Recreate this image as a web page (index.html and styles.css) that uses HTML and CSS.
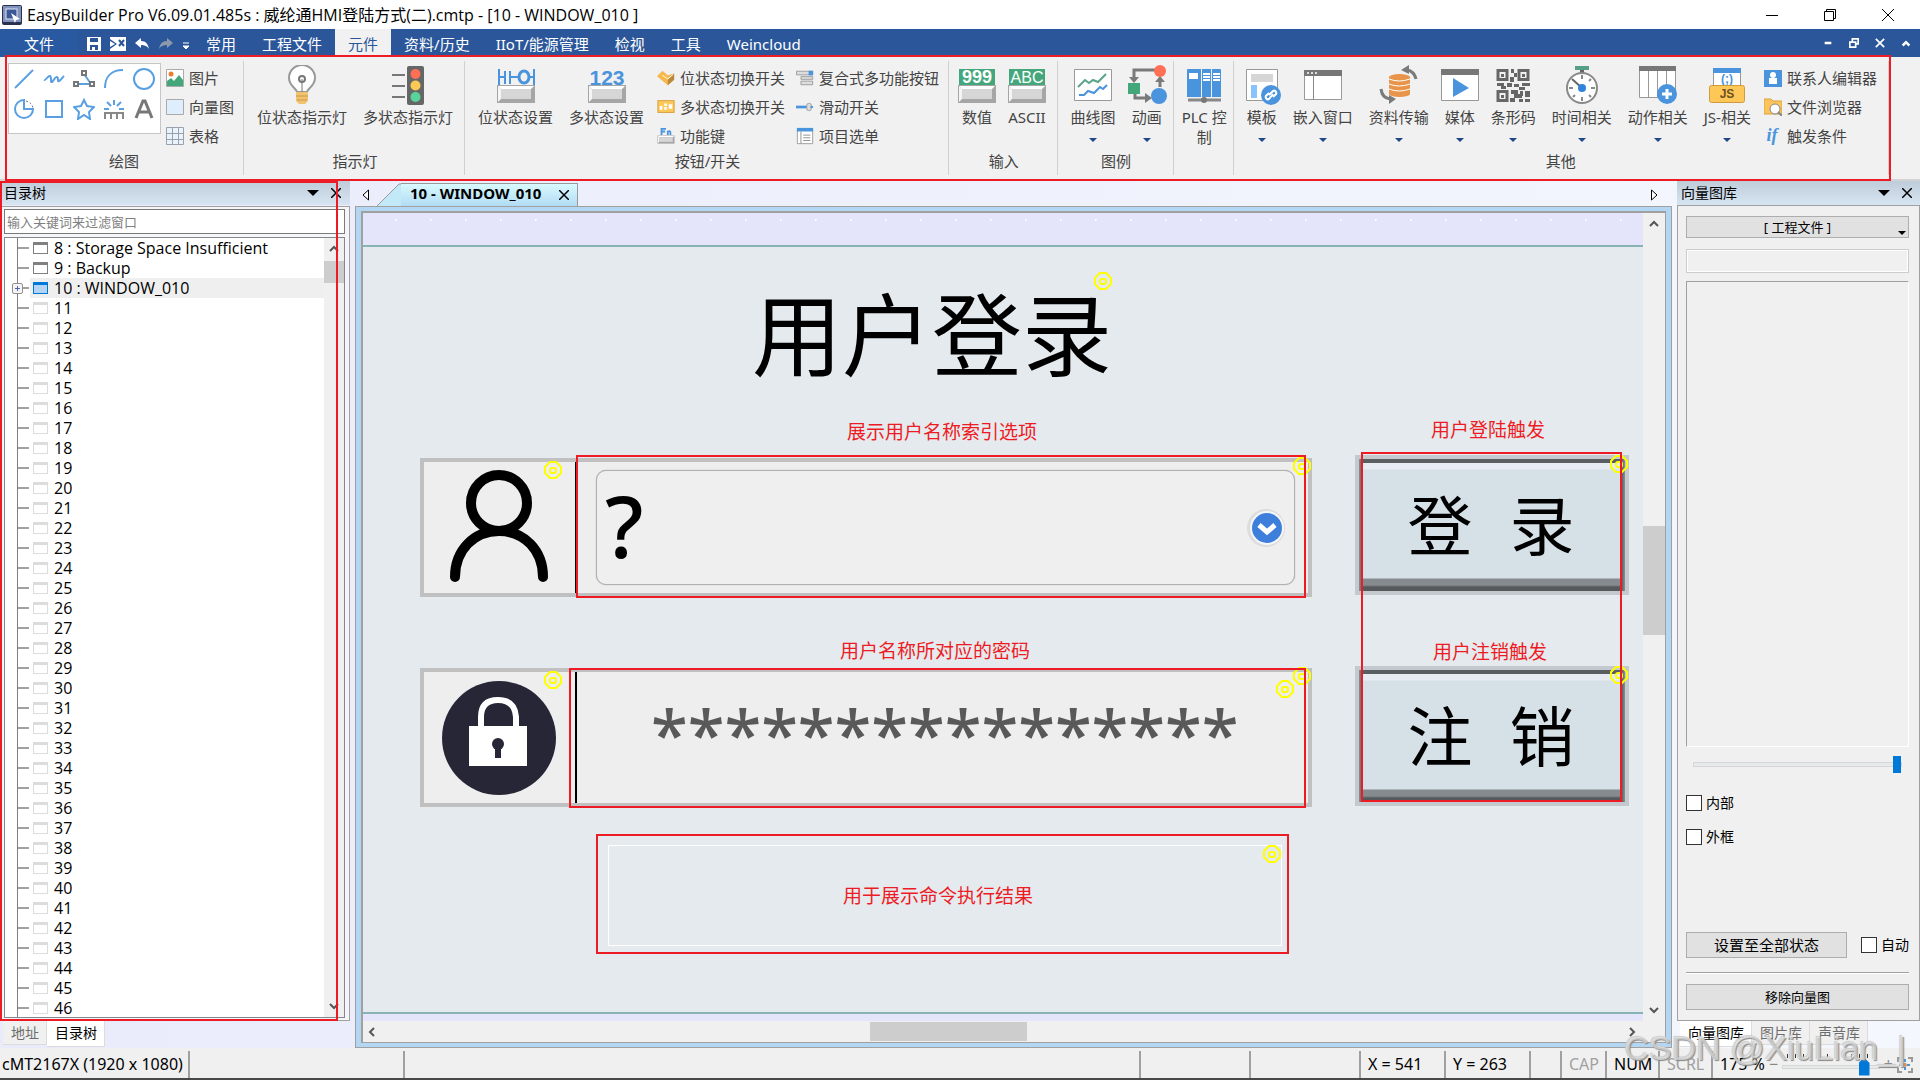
FILE: index.html
```html
<!DOCTYPE html>
<html lang="zh-CN">
<head>
  <meta charset="UTF-8" />
  <meta name="viewport" content="width=device-width, initial-scale=1.0"/>
  <title>EasyBuilder Pro</title>
  <link rel="stylesheet" href="styles.css">
</head>
<body>
  <svg class="defs" aria-hidden="true">
    <symbol id="gear" viewBox="0 0 18 18">
      <path d="M6 1h6l5 5v6l-5 5H6l-5-5V6z" fill="none" stroke="#ff0" stroke-width="2" stroke-linejoin="round"/>
      <rect x="6" y="7" width="6" height="5" rx="2" fill="none" stroke="#ff0" stroke-width="2"/>
    </symbol>
    <symbol id="key" viewBox="0 0 40 20">
      <rect x="1" y="1" width="38" height="18" fill="#a6a6a6"/>
      <path d="M2 2h36l-3 3H5z" fill="#fff"/>
      <path d="M2 2v16l3-3V5z" fill="#f5f5f5"/>
      <rect x="5" y="5" width="30" height="10" fill="#d6d6d6"/>
    </symbol>
    <symbol id="up" viewBox="0 0 12 12"><path d="M2 8l4-4 4 4" fill="none" stroke="#555" stroke-width="2"/></symbol>
    <symbol id="down" viewBox="0 0 12 12"><path d="M2 4l4 4 4-4" fill="none" stroke="#555" stroke-width="2"/></symbol>
    <symbol id="left" viewBox="0 0 12 12"><path d="M8 2L4 6l4 4" fill="none" stroke="#555" stroke-width="2"/></symbol>
    <symbol id="right" viewBox="0 0 12 12"><path d="M4 2l4 4-4 4" fill="none" stroke="#555" stroke-width="2"/></symbol>
    <symbol id="caret" viewBox="0 0 12 6"><path d="M0 0h12L6 6z"/></symbol>
    <symbol id="cross" viewBox="0 0 10 10"><path d="M0 0l10 10M10 0L0 10" fill="none" stroke="currentColor" stroke-width="1.500"/></symbol>
  </svg>

  <header class="titlebar">
    <svg class="app-icon" viewBox="0 0 20 20">
      <rect width="20" height="20" rx="2" fill="#26304f"/>
      <rect x="1" y="1" width="18" height="16" fill="#8292bd"/>
      <rect x="4" y="4" width="11" height="10" fill="#3c5896" stroke="#dfe5f5"/>
      <path d="M9 8l9 6-4 1-1 3z" fill="#fff"/>
    </svg>
    <h1>EasyBuilder Pro V6.09.01.485s : 威纶通HMI登陆方式(二).cmtp - [10 - WINDOW_010 ]</h1>
    <div class="window-buttons">
      <button aria-label="最小化"><svg viewBox="0 0 12 12"><path d="M0 6.500h12" stroke="#000"/></svg></button>
      <button aria-label="还原"><svg viewBox="0 0 12 12"><path d="M.5 2.500h9v9h-9zM2.500 2.500v-2h9v9h-2" fill="none" stroke="#000"/></svg></button>
      <button aria-label="关闭"><svg viewBox="0 0 12 12"><path d="M0 0l12 12M12 0L0 12" stroke="#000"/></svg></button>
    </div>
  </header>

  <nav class="menubar">
    <button class="file-tab">文件</button>
    <div class="quick">
      <button aria-label="保存"><svg viewBox="0 0 16 16"><path d="M1 1h14v14H1z" fill="#fff"/><path d="M4 2h8v4H4zM4 9h8v5H4z" fill="#2b579a"/><path d="M6 11h3v4H6z" fill="#fff"/></svg></button>
      <button aria-label="编译"><svg viewBox="0 0 16 16"><path d="M0 1h16v14H0z" fill="#fff"/><path d="M0 3l7 5-7 5z" fill="#2b579a"/><path d="M0 5l5 3-5 3z" fill="#fff"/><path d="M9 4l5 6M14 4l-5 6" stroke="#2b579a" stroke-width="2"/></svg></button>
      <button aria-label="撤销"><svg viewBox="0 0 16 16"><path d="M1 7l6-5v3c5 0 7 3 8 8-2-3-4-4-8-4v3z" fill="#fff"/></svg></button>
      <button aria-label="重做"><svg viewBox="0 0 16 16"><path d="M15 7L9 2v3c-5 0-7 3-8 8 2-3 4-4 8-4v3z" fill="#8c99ad"/></svg></button>
      <button class="more" aria-label="更多"><svg viewBox="0 0 8 16"><path d="M1 7h6M1 10h6l-3 3z" fill="#fff" stroke="#fff"/></svg></button>
    </div>
    <a href="#">常用</a>
    <a href="#">工程文件</a>
    <a href="#" class="active">元件</a>
    <a href="#">资料/历史</a>
    <a href="#">IIoT/能源管理</a>
    <a href="#">检视</a>
    <a href="#">工具</a>
    <a href="#">Weincloud</a>
    <div class="mdi-buttons">
      <button aria-label="最小化窗口"><svg viewBox="0 0 12 12"><path d="M2 6h8" stroke="#fff" stroke-width="3"/></svg></button>
      <button aria-label="还原窗口"><svg viewBox="0 0 12 12"><path d="M1 5h7v6H1zM4 4V1h7v6H9" fill="none" stroke="#fff" stroke-width="2"/></svg></button>
      <button aria-label="关闭窗口"><svg viewBox="0 0 12 12"><path d="M1 1l10 10M11 1L1 11" stroke="#fff" stroke-width="2"/></svg></button>
      <button aria-label="折叠功能区"><svg viewBox="0 0 12 12"><path d="M2 9l4-4 4 4" fill="none" stroke="#fff" stroke-width="3"/></svg></button>
    </div>
  </nav>

  <section class="ribbon">
    <div class="group">
      <div class="group-body">
        <div class="gallery">
          <button aria-label="直线"><svg viewBox="0 0 22 22"><path d="M2 20L20 2" class="blue"/></svg></button>
          <button aria-label="曲线"><svg viewBox="0 0 22 22"><path d="M1 12c2 1 4-5 6-4s0 7 2 6 3-6 5-5 0 5 2 4 3-3 5-5" class="blue"/></svg></button>
          <button aria-label="折线"><svg viewBox="0 0 22 22"><path d="M4 16h14L11 6" class="blue"/><path d="M1 14h4v4H1zM17 14h4v4h-4zM9 3h4v4H9z" class="node"/></svg></button>
          <button aria-label="弧形"><svg viewBox="0 0 22 22"><path d="M2 20C2 9 8 2 20 2" class="blue"/></svg></button>
          <button aria-label="圆形"><svg viewBox="0 0 22 22"><circle cx="11" cy="11" r="10" class="blue"/></svg></button>
          <button aria-label="扇形"><svg viewBox="0 0 22 22"><path d="M11 2a9 9 0 1 0 9 9h-9z" class="blue"/><path d="M13 3c4 1 6 3 7 7" fill="none" stroke="#777" stroke-dasharray="2 2"/></svg></button>
          <button aria-label="矩形"><svg viewBox="0 0 22 22"><path d="M3 3h16v16H3z" class="blue"/></svg></button>
          <button aria-label="星形"><svg viewBox="0 0 22 22"><path d="M11 2l3 6 7 1-5 5 1 7-6-4-6 4 1-7-5-5 7-1z" class="blue"/></svg></button>
          <button aria-label="刻度"><svg viewBox="0 0 22 22"><path d="M1 11h5M4 4l4 4M11 2v5M18 4l-4 4M21 11h-5" class="blue"/><path d="M2 21v-6h18v6M8 15v6M14 15v6" fill="none" stroke="#888" stroke-width="2"/></svg></button>
          <button aria-label="文字"><svg viewBox="0 0 22 22"><path d="M3 20l7-17h2l7 17M6 14h10" fill="none" stroke="#777" stroke-width="3"/></svg></button>
        </div>
        <div class="stack">
          <button><svg viewBox="0 0 18 18"><path d="M.5.500h17v17H.5z" fill="#fff" stroke="#aaa"/><circle cx="5" cy="5" r="2.500" fill="#ed7d31"/><path d="M1 17v-5l4-3 3 3 5-6 4 5v6z" fill="#44a77c"/></svg>图片</button>
          <button><svg viewBox="0 0 18 18"><path d="M.5 1.500h17v15H.5z" fill="#dfeefc" stroke="#aaa"/></svg>向量图</button>
          <button><svg viewBox="0 0 18 18"><path d="M.5.500h17v17H.5zM.5 6.500h17M.5 12.500h17M6.500.500v17M12.500.500v17" fill="#eaf3fc" stroke="#98a2ad"/></svg>表格</button>
        </div>
      </div>
      <div class="group-name">绘图</div>
    </div>

    <div class="group">
      <div class="group-body">
        <button class="big"><svg viewBox="0 0 40 40"><path d="M15 27c0-3-8-6-8-14a13 13 0 0 1 26 0c0 8-8 11-8 14z" fill="#fff" stroke="#999" stroke-width="2"/><circle cx="20" cy="14" r="3" fill="none" stroke="#777" stroke-width="2"/><path d="M20 14v13" stroke="#777"/><path d="M14 27h12v9l-3 3h-6l-3-3z" fill="#f0c36c"/><path d="M14 31h12M15 35h10" stroke="#c79a4b"/></svg>位状态指示灯</button>
        <button class="big"><svg viewBox="0 0 40 40"><path d="M4 10h13M4 21h13M4 32h13" stroke="#777" stroke-width="2"/><rect x="19" y="1" width="17" height="39" rx="2" fill="#666"/><circle cx="27.500" cy="9" r="5" fill="#ff6f55"/><circle cx="27.500" cy="20.500" r="5" fill="#ffc957"/><circle cx="27.500" cy="32" r="5" fill="#58d49b"/></svg>多状态指示灯</button>
      </div>
      <div class="group-name">指示灯</div>
    </div>

    <div class="group">
      <div class="group-body">
        <button class="big"><svg viewBox="0 0 40 40"><path d="M3 4v16M3 12h5M9 6v13M14 6v13M14 12h9M33 12h4M38 4v16" fill="none" stroke="#4a94de" stroke-width="2"/><ellipse cx="28" cy="12" rx="5" ry="6" fill="none" stroke="#4a94de" stroke-width="3"/><use href="#key" y="19" width="40" height="20"/></svg>位状态设置</button>
        <button class="big"><svg viewBox="0 0 40 40"><text x="20" y="20" class="digits">123</text><use href="#key" y="19" width="40" height="20"/></svg>多状态设置</button>
        <div class="stack">
          <button><svg viewBox="0 0 20 18"><path d="M0 7l6-6 6 5 7-2v7l-7 6z" fill="#f7b84b"/><path d="M12 11l7-7v7l-7 6z" fill="#b98a3d"/><path d="M6 6l6 4 6-5" fill="none" stroke="#fff"/></svg>位状态切换开关</button>
          <button><svg viewBox="0 0 20 18"><rect x="1" y="2" width="18" height="13" fill="#ffc85a" stroke="#d49a34"/><path d="M3 8h3v4H3zM8 5h3v3H8zM8 9h3v3H8zM13 6h4v5h-4z" fill="#fff"/></svg>多状态切换开关</button>
          <button><svg viewBox="0 0 20 18"><path d="M5 8V1h5M5 4h4M12 8V4c3-1 3 0 3 4" fill="none" stroke="#4a94de" stroke-width="2"/><use href="#key" y="8" width="20" height="10"/></svg>功能键</button>
        </div>
        <div class="stack">
          <button><svg viewBox="0 0 20 18"><path d="M.5 1.500h18v4H.5zM5.500 7.500h13v3h-13zM5.500 12.500h13v4h-13z" fill="#ddd" stroke="#999"/><path d="M14 1h5v5h-5z" fill="#4a94de"/></svg>复合式多功能按钮</button>
          <button><svg viewBox="0 0 20 18"><path d="M0 9h12" stroke="#4a94de" stroke-width="3"/><rect x="12" y="5" width="5" height="8" rx="2" fill="#ddd" stroke="#999"/><path d="M16 9h3" stroke="#4a94de" stroke-width="2"/></svg>滑动开关</button>
          <button><svg viewBox="0 0 20 18"><path d="M1.500 1.500h17v16h-17z" fill="#fff" stroke="#999"/><path d="M1 0h18v4H1z" fill="#4a94de"/><path d="M5.500 4v13M8 8h8M8 11h8M8 14h8" stroke="#888"/></svg>项目选单</button>
        </div>
      </div>
      <div class="group-name">按钮/开关</div>
    </div>

    <div class="group">
      <div class="group-body">
        <button class="big"><svg viewBox="0 0 40 40"><path d="M2 4h36v16H2z" fill="#44a77c"/><text x="20" y="18" class="screen">999</text><use href="#key" y="19" width="40" height="20"/></svg>数值</button>
        <button class="big"><svg viewBox="0 0 40 40"><path d="M2 4h36v16H2z" fill="#44a77c"/><text x="20" y="18" class="screen abc">ABC</text><use href="#key" y="19" width="40" height="20"/></svg>ASCII</button>
      </div>
      <div class="group-name">输入</div>
    </div>

    <div class="group">
      <div class="group-body">
        <button class="big drop"><svg viewBox="0 0 40 40"><path d="M1.500 4.500h37v31h-37z" fill="#fff" stroke="#999"/><path d="M5 22l7-7 4 3 4-3 5 2 8-8" fill="none" stroke="#5ba58a" stroke-width="2"/><path d="M6 30h5l4-4 6 2 6-6 3 2 4-4" fill="none" stroke="#4a94de" stroke-width="2"/></svg>曲线图</button>
        <button class="big drop"><svg viewBox="0 0 40 40"><path d="M28 5H7v9M8 28v5h12M33 22v-8" fill="none" stroke="#7a7a7a" stroke-width="3"/><path d="M2 12h10l-5 6zM18 28v10l7-5zM28 17h10l-5-6z" fill="#7a7a7a"/><path d="M1 18h12v11H1z" fill="#44a77c"/><circle cx="33" cy="6" r="6" fill="#ff6f55"/><circle cx="32" cy="31" r="8" fill="#4a94de"/></svg>动画</button>
      </div>
      <div class="group-name">图例</div>
    </div>

    <div class="group">
      <div class="group-body">
        <button class="big plc"><svg viewBox="0 0 40 40"><path d="M3 5q0-1 1-1h13v28H3zM18 4h9v28h-9zM28 4h8q1 0 1 1v27h-9z" fill="#4a94de"/><path d="M5 8h9v6H5zM19 8h7v2h-7zM19 11h7v2h-7zM19 14h7v2h-7zM29 8h7v2h-7zM29 11h7v2h-7zM29 14h7v2h-7z" fill="#fff"/><path d="M4 35h33" stroke="#888" stroke-width="3"/><circle cx="20" cy="35" r="3" fill="#777"/></svg>PLC 控<br>制</button>
      </div>
      <div class="group-name"></div>
    </div>

    <div class="group last">
      <div class="group-body">
        <button class="big drop"><svg viewBox="0 0 40 40"><path d="M4.500 4.500h31v31h-31z" fill="#fff" stroke="#999"/><path d="M9 9h22v8H9z" fill="#d6d6d6"/><path d="M9 20h6v13H9z" fill="#8ac3fb"/><circle cx="29" cy="30" r="10" fill="#4a94de"/><path d="M27 30l4-4q2-1 3 1t-1 3l-2 2M31 29l-4 5q-2 1-3-1t1-3l2-2" fill="none" stroke="#fff" stroke-width="2"/></svg>模板</button>
        <button class="big drop"><svg viewBox="0 0 40 40"><path d="M1.500 5.500h37v29h-37z" fill="#fff" stroke="#999"/><path d="M1 5h38v6H1z" fill="#777"/><path d="M4 8h2M8 8h2M12 8h2" stroke="#ddd" stroke-width="2"/><path d="M10.500 11v24" stroke="#888"/></svg>嵌入窗口</button>
        <button class="big drop"><svg viewBox="0 0 40 40"><path d="M10 12h21v17H10z" fill="#e8954b"/><ellipse cx="20.500" cy="12" rx="10.500" ry="3" fill="#e8954b"/><ellipse cx="20.500" cy="29" rx="10.500" ry="3" fill="#e8954b"/><path d="M10 14q10 4 21 0M10 19q10 4 21 0M10 24q10 4 21 0" fill="none" stroke="#fff"/><path d="M37 14q-2-8-9-9M2 24q1 9 9 10" fill="none" stroke="#7a7a7a" stroke-width="3"/><path d="M22 5l8-5v9zM17 34l-7 5v-9z" fill="#7a7a7a"/></svg>资料传输</button>
        <button class="big drop"><svg viewBox="0 0 40 40"><path d="M1.500 4.500h37v31h-37z" fill="#fff" stroke="#999"/><path d="M1 4h38v6H1z" fill="#777"/><path d="M13 13l16 10-16 9z" fill="#4a94de"/></svg>媒体</button>
        <button class="big drop"><svg viewBox="0 0 40 40"><path d="M5 5.500h9v9H5zM26 5.500h9v9h-9zM5 26.500h9v9H5z" fill="none" stroke="#666" stroke-width="3"/><path d="M8 9h3v3H8zM29 9h3v3h-3zM8 30h3v3H8zM18 4h3v4h-3zM21 8h3v4h-3zM17 12h4v5h-4zM4 18h7v3H4zM14 18h5v4h-5zM21 19h5v3h-5zM29 18h8v3h-8zM8 21h5v3H8zM26 22h6v3h-6zM18 25h7v4h-7zM21 29h8v4h-8zM17 33h5v4h-5zM27 26h3v5h-3zM32 26h5v6h-5zM26 34h4v3h-4zM32 34h5v3h-5z" fill="#666"/></svg>条形码</button>
        <button class="big drop"><svg viewBox="0 0 40 40"><path d="M13 1h14v4H13z" fill="#559f84"/><path d="M18 5h4v4h-4z" fill="#666"/><circle cx="20" cy="23" r="15" fill="#fff" stroke="#888" stroke-width="2"/><path d="M20 10v4M20 32v4M7 23h4M29 23h4M29 14l-2 2M29 32l-2-2M11 32l2-2" stroke="#888" stroke-width="2"/><path d="M10 14l10 9" stroke="#666" stroke-width="2"/><circle cx="20" cy="23" r="4" fill="#2f83da"/></svg>时间相关</button>
        <button class="big drop"><svg viewBox="0 0 40 40"><path d="M1.500 2.500h36v30h-36zM10.500 5v27M19.500 5v27M28.500 5v27" fill="#fff" stroke="#999"/><path d="M1 1h37v5H1z" fill="#777"/><circle cx="29" cy="29" r="10" fill="#4a94de"/><path d="M24 29h10M29 24v10" stroke="#fff" stroke-width="3"/></svg>动作相关</button>
        <button class="big drop"><svg viewBox="0 0 40 40"><path d="M6.500 3.500h27v20h-27z" fill="#fff" stroke="#999"/><path d="M6 3h28v5H6z" fill="#4a94de"/><text x="20" y="18" class="code">(;)</text><rect x="2.500" y="20.500" width="35" height="17" rx="2" fill="#ffc757" stroke="#cf9b3c"/><text x="20" y="33" class="js">JS</text></svg>JS-相关</button>
        <div class="stack">
          <button><svg viewBox="0 0 18 18"><path d="M0 1h18v17H0z" fill="#4a94de"/><circle cx="9" cy="6" r="3" fill="#fff"/><path d="M5 9h8v6H5z" fill="#fff"/></svg>联系人编辑器</button>
          <button><svg viewBox="0 0 18 18"><path d="M0 1h7l2 2h9v13H0z" fill="#fcc45a" stroke="#d9a340"/><circle cx="11" cy="11" r="5" fill="#fff" stroke="#888"/><path d="M14 14l4 4" stroke="#888" stroke-width="2"/></svg>文件浏览器</button>
          <button><svg class="if-icon" viewBox="0 0 18 18"><text x="8" y="14" class="if">if</text></svg>触发条件</button>
        </div>
      </div>
      <div class="group-name">其他</div>
    </div>
    <div class="mark mark-ribbon"></div>
  </section>

  <main class="workspace">
    <aside class="panel tree-panel">
      <div class="panel-title">
        <h2>目录树</h2>
        <button aria-label="选项"><svg class="caret" viewBox="0 0 12 6"><use href="#caret"/></svg></button>
        <button aria-label="关闭面板"><svg class="cross" viewBox="0 0 10 10"><use href="#cross"/></svg></button>
      </div>
      <div class="panel-body">
        <input class="filter" type="text" placeholder="输入关键词来过滤窗口" aria-label="过滤窗口">
        <div class="tree-box">
          <ul class="tree" id="tree">
            <li class="used"><i></i>8 : Storage Space Insufficient</li>
            <li class="used"><i></i>9 : Backup</li>
            <li class="selected"><b></b><i></i>10 : WINDOW_010</li>
          </ul>
          <div class="vscroll">
            <svg viewBox="0 0 12 12"><use href="#up"/></svg>
            <div class="thumb"></div>
            <svg class="end" viewBox="0 0 12 12"><use href="#down"/></svg>
          </div>
        </div>
      </div>
      <div class="panel-tabs">
        <a href="#">地址</a>
        <a href="#" class="active">目录树</a>
      </div>
      <div class="mark mark-tree"></div>
    </aside>

    <section class="editor">
      <div class="doc-tabs">
        <button class="step" aria-label="上一个"><svg viewBox="0 0 8 12"><path d="M6.500 1v10L1 6z" fill="#fff" stroke="#000"/></svg></button>
        <div class="doc-tab">
          <svg class="slope" viewBox="0 0 24 23" preserveAspectRatio="none"><path d="M0 23L22 1h2v22z" fill="#c2e9f7"/><path d="M0 23L22 1h2" fill="none" stroke="#999"/></svg>
          <span>10 - WINDOW_010</span>
          <button aria-label="关闭页签"><svg class="cross" viewBox="0 0 10 10"><use href="#cross"/></svg></button>
        </div>
        <button class="step next" aria-label="下一个"><svg viewBox="0 0 8 12"><path d="M1.500 1v10L7 6z" fill="#fff" stroke="#000"/></svg></button>
      </div>
      <div class="doc-frame">
        <div class="doc-view">
          <div class="margin-top"></div>
          <div class="page">
            <div class="page-title">用户登录<svg class="gear"><use href="#gear"/></svg></div>

            <div class="field user">
              <svg class="person" viewBox="0 0 98 116"><circle cx="49" cy="35" r="28" fill="none" stroke="#000" stroke-width="10"/><path d="M5 109C5 82 24 63 49 63s44 19 44 46" fill="none" stroke="#000" stroke-width="10" stroke-linecap="round"/></svg>
              <select class="user-name" aria-label="用户名称"><option>?</option></select>
              <svg class="pick" viewBox="0 0 40 40"><circle cx="19" cy="20" r="19" fill="#ddd"/><circle cx="20" cy="20" r="17" fill="#f4f6fa"/><circle cx="20" cy="20" r="15" fill="#3f7fdc"/><path d="M12 17l8 7 8-7" fill="none" stroke="#fff" stroke-width="5"/></svg>
              <svg class="gear inner"><use href="#gear"/></svg>
              <svg class="gear"><use href="#gear"/></svg>
            </div>

            <div class="field password">
              <svg class="lock" viewBox="0 0 116 116"><circle cx="58" cy="58" r="57" fill="#272636"/><path d="M40 50V37q0-17 17-17t18 17v13" fill="none" stroke="#fff" stroke-width="6"/><path d="M28 46h58v40H28z" fill="#fff"/><circle cx="57" cy="64" r="6" fill="#272636"/><path d="M54 64h6v14h-6z" fill="#272636"/></svg>
              <input class="secret" type="text" value="****************" aria-label="密码" readonly>
              <svg class="gear inner"><use href="#gear"/></svg>
              <svg class="gear input-gear"><use href="#gear"/></svg>
              <svg class="gear"><use href="#gear"/></svg>
            </div>

            <button class="hmi-button login"><span>登</span><span>录</span><svg class="gear"><use href="#gear"/></svg></button>
            <button class="hmi-button logout"><span>注</span><span>销</span><svg class="gear"><use href="#gear"/></svg></button>

            <div class="result"><svg class="gear"><use href="#gear"/></svg></div>

            <div class="mark mark-user"></div>
            <div class="mark mark-password"></div>
            <div class="mark mark-buttons"></div>
            <div class="mark mark-result"></div>
            <p class="note note-user">展示用户名称索引选项</p>
            <p class="note note-login">用户登陆触发</p>
            <p class="note note-password">用户名称所对应的密码</p>
            <p class="note note-logout">用户注销触发</p>
            <p class="note note-result">用于展示命令执行结果</p>
          </div>
          <div class="margin-bottom"></div>
        </div>
        <div class="vscroll doc-v">
          <svg viewBox="0 0 12 12"><use href="#up"/></svg>
          <div class="thumb"></div>
          <svg class="end" viewBox="0 0 12 12"><use href="#down"/></svg>
        </div>
        <div class="hscroll">
          <svg viewBox="0 0 12 12"><use href="#left"/></svg>
          <div class="thumb"></div>
          <svg viewBox="0 0 12 12"><use href="#right"/></svg>
        </div>
      </div>
    </section>

    <aside class="panel library">
      <div class="panel-title">
        <h2>向量图库</h2>
        <button aria-label="选项"><svg class="caret" viewBox="0 0 12 6"><use href="#caret"/></svg></button>
        <button aria-label="关闭面板"><svg class="cross" viewBox="0 0 10 10"><use href="#cross"/></svg></button>
      </div>
      <div class="panel-body">
        <div class="source">
          <select aria-label="图库来源"><option>[ 工程文件 ]</option></select>
          <svg viewBox="0 0 12 6"><use href="#caret"/></svg>
        </div>
        <input class="search" type="text" aria-label="搜索">
        <div class="preview"></div>
        <input class="size" type="range" min="0" max="100" value="100" aria-label="缩图大小">
        <label class="check"><input type="checkbox">内部</label>
        <label class="check"><input type="checkbox">外框</label>
        <div class="apply">
          <button class="apply-all">设置至全部状态</button>
          <label class="check"><input type="checkbox">自动</label>
        </div>
        <hr>
        <button class="remove">移除向量图</button>
      </div>
      <div class="panel-tabs">
        <a href="#" class="active">向量图库</a>
        <a href="#">图片库</a>
        <a href="#">声音库</a>
      </div>
    </aside>
  </main>

  <footer class="statusbar">
    <div class="cell model">cMT2167X (1920 x 1080)</div>
    <div class="cell info"></div>
    <div class="cell grow"></div>
    <div class="cell blank"></div>
    <div class="cell blank"></div>
    <div class="cell pos">X = 541</div>
    <div class="cell pos">Y = 263</div>
    <div class="cell gap"></div>
    <div class="cell cap off">CAP</div>
    <div class="cell lock-key">NUM</div>
    <div class="cell lock-key off">SCRL</div>
    <div class="zoom">
      <span class="percent">175 %</span>
      <span class="sign">−</span>
      <div class="zoom-slider">
        <div class="ticks"></div>
        <input type="range" min="0" max="100" value="89" aria-label="缩放">
      </div>
      <span class="sign">+</span>
      <svg viewBox="0 0 16 16"><path d="M1 5V1h4M11 1h4v4M15 11v4h-4M5 15H1v-4" fill="none" stroke="#999" stroke-width="2"/><path d="M8 2v12M2 8h12" stroke="#4a94de" stroke-width="2" stroke-dasharray="3 1"/><circle cx="8" cy="8" r="2" fill="#e8954b"/></svg>
    </div>
    <div class="watermark">CSDN @XiuLian_|</div>
  </footer>

  <script>
    const tree = document.getElementById("tree");
    for (let n = 11; n <= 46; n++) {
      const li = document.createElement("li");
      li.appendChild(document.createElement("i"));
      li.append(n);
      tree.appendChild(li);
    }
  </script>
</body>
</html>
```

FILE: styles.css
```css
* {
  box-sizing: border-box;
}

body {
  margin: 0;
  height: 100vh;
  display: flex;
  flex-direction: column;
  font-family: 'Noto Sans', 'Noto Sans CJK SC', sans-serif;
  font-size: 15px;
  line-height: 20px;
  color: #000;
  background: #f0f0f0;
  border-bottom: 2px solid #484848;
  overflow: hidden;
}

button, input, select {
  font: inherit;
  color: inherit;
  margin: 0;
}

button {
  padding: 0;
  border: none;
  background: none;
}

a {
  color: inherit;
  text-decoration: none;
}

svg {
  display: block;
  flex: none;
}

.defs {
  position: absolute;
  width: 0;
  height: 0;
}

/* title bar */
.titlebar {
  flex: none;
  height: 29px;
  padding: 0 3px 0 2px;
  display: flex;
  align-items: center;
  gap: 5px;
  background: #fff;
}

.titlebar h1 {
  margin: 0;
  flex: 1;
  font-family: 'Open Sans', 'Noto Sans CJK SC', sans-serif;
  font-size: 16px;
  font-weight: normal;
}

.app-icon {
  width: 20px;
  height: 20px;
}

.window-buttons {
  display: flex;
}

.window-buttons button {
  width: 58px;
  height: 28px;
  display: grid;
  place-items: center;
}

.window-buttons svg {
  width: 12px;
  height: 12px;
}

/* menu */
.menubar {
  flex: none;
  height: 28px;
  display: flex;
  align-items: stretch;
  background: #2b579a;
  color: #fff;
}

.menubar > a {
  padding: 0 13px;
  line-height: 30px;
}

.menubar > a.active {
  background: #f1f1f1;
  color: #2b579a;
}

.file-tab {
  width: 78px;
  line-height: 30px;
  background: #2859a1;
}

.quick {
  display: flex;
  align-items: center;
  gap: 8px;
  padding: 2px 3px 0 8px;
}

.quick svg {
  width: 16px;
  height: 16px;
}

.quick .more svg {
  width: 8px;
}

.mdi-buttons {
  display: flex;
  margin-left: auto;
  padding-right: 1px;
}

.mdi-buttons button {
  width: 26px;
  display: grid;
  place-items: center;
}

.mdi-buttons svg {
  width: 10px;
  height: 10px;
}

/* ribbon */
.ribbon {
  position: relative;
  flex: none;
  height: 124px;
  padding: 4px 0 4px 3px;
  display: flex;
  background: #f1f1f1;
  border-bottom: 2px solid #d4d4d4;
  color: #444;
}

.group {
  display: flex;
  flex-direction: column;
  padding: 0 3px 0 5px;
  border-right: 1px solid #d0d0d0;
}

.group-body {
  display: flex;
  flex: 1;
  padding-top: 2px;
}

.group-name {
  height: 24px;
  text-align: center;
}

.group.last {
  padding-right: 5px;
}

.gallery {
  display: grid;
  grid-template-columns: repeat(5, 30px);
  grid-template-rows: 30px 30px;
  width: 153px;
  height: 71px;
  border: 1px solid #c6c6c6;
  background: #fff;
}

.gallery button {
  display: grid;
  place-items: center;
}

.gallery svg {
  width: 22px;
  height: 22px;
}

.blue {
  fill: none;
  stroke: #5a9fe2;
  stroke-width: 2;
}

.node {
  fill: #fff;
  stroke: #777;
  stroke-width: 2;
}

.stack {
  display: flex;
  flex-direction: column;
}

.stack button {
  display: flex;
  align-items: center;
  gap: 5px;
  height: 29px;
  padding: 0 6px 0 5px;
}

.stack svg {
  width: 18px;
  height: 18px;
}

.stack .if-icon {
  overflow: visible;
}

.big {
  display: flex;
  flex-direction: column;
  align-items: center;
  padding: 2px 8px 0;
}

.big svg {
  width: 40px;
  height: 40px;
  margin: 0 -5px 2px;
}

.plc {
  width: 51px;
  padding: 2px 0 0;
}

.drop::after {
  content: "";
  margin-top: 11px;
  border: 4px solid transparent;
  border-top-color: #1f4788;
  border-bottom: 0;
}

.digits,
.screen,
.code,
.js,
.if {
  font-family: 'Liberation Sans', sans-serif;
  font-weight: bold;
  text-anchor: middle;
}

.digits {
  font-size: 21px;
  fill: #4a94de;
}

.screen {
  font-size: 18px;
  fill: #fff;
}

.abc {
  font-size: 16px;
  font-weight: normal;
}

.code {
  font-size: 12px;
  fill: #4a94de;
}

.js {
  font-size: 12px;
  fill: #6b5220;
}

.if {
  font-family: 'Liberation Serif', serif;
  font-size: 18px;
  font-style: italic;
  fill: #4a94de;
}

/* red annotation frames */
.mark {
  position: absolute;
  border: 2px solid #ed1c24;
  pointer-events: none;
}

.mark-ribbon {
  left: 5px;
  right: 29px;
  top: -2px;
  bottom: -2px;
  z-index: 2;
}

.mark-tree {
  left: 0;
  right: 12px;
  top: 0;
  bottom: 27px;
}

/* workspace */
.workspace {
  flex: 1;
  min-height: 0;
  display: flex;
  background: linear-gradient(90deg, #e9ebfb, #f4f7fd);
}

.panel {
  display: flex;
  flex-direction: column;
}

.panel-title {
  flex: none;
  height: 24px;
  padding: 0 8px 0 4px;
  display: flex;
  align-items: center;
  gap: 12px;
  background: linear-gradient(#bfcddb, #d7e4f2);
}

.panel-title h2 {
  margin: 0;
  flex: 1;
  font-size: 14px;
  font-weight: normal;
}

.caret {
  width: 12px;
  height: 6px;
}

.cross {
  width: 10px;
  height: 10px;
}

.panel-body {
  flex: 1;
  min-height: 0;
  display: flex;
  flex-direction: column;
  border: 1px solid #a0a0a0;
}

.panel-tabs {
  flex: none;
  height: 27px;
  padding-left: 3px;
  display: flex;
  align-items: flex-start;
  font-size: 14px;
  color: #6d6d6d;
}

.panel-tabs a {
  height: 24px;
  padding: 2px 7px 0 8px;
  background: #f0f0f0;
  border: 1px solid #dcdcdc;
  border-width: 0 1px 1px 0;
}

.panel-tabs a.active {
  height: 26px;
  background: #fff;
  color: #000;
}

/* tree panel */
.tree-panel {
  position: relative;
  width: 350px;
}

.tree-panel .panel-title {
  padding-right: 9px;
}

.tree-panel .panel-body {
  margin-top: 1px;
  padding: 2px 4px;
  gap: 3px;
  background: #f6f6f8;
  border-left: 0;
}

.filter {
  flex: none;
  height: 25px;
  padding: 0 2px;
  border: 1px solid #7a7a7a;
  background: #fff;
  font-size: 13px;
}

.filter::placeholder {
  color: #808080;
}

.tree-box {
  flex: 1;
  min-height: 0;
  display: flex;
  border: 1px solid #828790;
  background: #fff;
  overflow: hidden;
}

.tree {
  flex: 1;
  margin: 0;
  padding: 0;
  list-style: none;
  font-family: 'Open Sans', sans-serif;
  font-size: 16px;
}

.tree li {
  position: relative;
  display: flex;
  align-items: center;
  gap: 6px;
  height: 20px;
  margin-left: 12px;
  padding-left: 15px;
  border-left: 1px solid #808080;
  background: linear-gradient(#a0a0a0, #a0a0a0) 0 9px / 11px 2px no-repeat;
}

.tree i {
  width: 15px;
  height: 12px;
  border: 1px solid #dcdcdc;
  border-top-width: 3px;
}

.tree .used i {
  border-color: #808080;
}

.tree .selected {
  background: linear-gradient(#a0a0a0, #a0a0a0) 0 9px / 11px 2px no-repeat, linear-gradient(90deg, transparent 12px, #efefef 12px);
}

.tree .selected i {
  border-color: #0078d7;
  background: #b3d4f3;
}

/* expander box over the branch line */
.tree b {
  position: absolute;
  left: -6px;
  top: 5px;
  width: 11px;
  height: 11px;
  border: 1px solid #919191;
  border-radius: 2px;
  background: linear-gradient(#4b63a7, #4b63a7) 2px 4px / 5px 1px no-repeat, linear-gradient(#4b63a7, #4b63a7) 4px 2px / 1px 5px no-repeat, #f4f4f4;
}

.vscroll {
  width: 20px;
  display: flex;
  flex-direction: column;
  align-items: center;
  padding: 5px 0;
  background: #f0f0f0;
}

.vscroll svg,
.hscroll svg {
  width: 12px;
  height: 12px;
}

.vscroll .thumb {
  width: 100%;
  height: 22px;
  margin-top: 6px;
  background: #cdcdcd;
}

.vscroll .end {
  margin-top: auto;
}

/* editor */
.editor {
  flex: 1;
  min-width: 0;
  display: flex;
  flex-direction: column;
  padding: 0 5px 0 5px;
}

.doc-tabs {
  flex: none;
  height: 25px;
  padding: 2px 14px 0 7px;
  display: flex;
}

.step svg {
  width: 8px;
  height: 12px;
}

.step.next {
  margin-left: auto;
}

.doc-tab {
  display: flex;
  align-items: center;
  margin-left: 7px;
  font-weight: bold;
}

.slope {
  width: 24px;
  height: 23px;
}

.doc-tab span {
  height: 23px;
  padding: 0 18px 0 9px;
  border-top: 1px solid #999;
  background: linear-gradient(#d8f9fe, #b2dcf4);
  line-height: 19px;
}

.doc-tab button {
  height: 23px;
  padding-right: 8px;
  border-top: 1px solid #999;
  border-right: 1px solid #999;
  background: linear-gradient(#d8f9fe, #b2dcf4);
}

.doc-frame {
  flex: 1;
  min-height: 0;
  display: grid;
  grid-template-columns: 1fr 23px;
  grid-template-rows: 1fr 22px;
  border: 1px solid #a0a0a0;
  padding: 4px 5px;
  background: linear-gradient(#f0f0f0, #f0f0f0) content-box, #b3d7f2;
}

.doc-view {
  min-height: 0;
  display: flex;
  flex-direction: column;
  border: 2px solid #a0a0a0;
  border-width: 2px 0 0 2px;
}

.margin-top {
  flex: none;
  height: 32px;
  background: radial-gradient(circle, #fff 1px, transparent 1px) 15px -11px / 35px 35px, #e4e4fa;
}

.margin-bottom {
  flex: none;
  height: 7px;
  background: #e4e4fa;
}

.page {
  position: relative;
  flex: 1;
  border: 2px solid #8ab3b5;
  border-width: 2px 0;
  background: #e5eaee;
  overflow: hidden;
}

.doc-v {
  width: 23px;
  border: 2px solid #a0a0a0;
  border-width: 2px 1px 0 0;
}

.doc-v .thumb {
  height: 109px;
  margin-top: 296px;
}

.hscroll {
  grid-column: 1 / 3;
  display: flex;
  align-items: center;
  justify-content: space-between;
  padding: 0 27px 0 3px;
  border: 1px solid #a0a0a0;
  border-width: 0 1px 1px 2px;
}

.hscroll .thumb {
  width: 157px;
  height: 19px;
  margin-right: 108px;
  background: #cdcdcd;
}

/* HMI page objects, placed freely on the page */
.gear {
  position: absolute;
  width: 18px;
  height: 18px;
  top: -1px;
  right: 0;
}

.page-title {
  position: absolute;
  left: 389px;
  top: 23px;
  width: 360px;
  font-size: 90px;
  line-height: 128px;
}

.page-title .gear {
  top: 2px;
}

.field {
  position: absolute;
  left: 57px;
  width: 892px;
  height: 139px;
  border: 4px solid #c0c0c0;
  background: #eee;
}

.field::before {
  content: "";
  position: absolute;
  left: 151px;
  top: 0;
  bottom: 0;
  width: 2px;
  background: #000;
}

.user {
  top: 211px;
}

.password {
  top: 421px;
}

.field .gear {
  top: -5px;
  right: -3px;
}

.field .gear.inner {
  top: -1px;
  right: auto;
  left: 120px;
}

.field .gear.input-gear {
  top: 8px;
  right: 14px;
}

.person {
  position: absolute;
  left: 26px;
  top: 6px;
  width: 98px;
  height: 116px;
}

.lock {
  position: absolute;
  left: 17px;
  top: 8px;
  width: 116px;
  height: 116px;
}

.user-name {
  position: absolute;
  left: 172px;
  top: 8px;
  width: 699px;
  height: 115px;
  padding: 0 8px 6px;
  appearance: none;
  border: 1px solid #b0b0b0;
  border-radius: 10px;
  background: #efefef;
  font-size: 86px;
  font-weight: 500;
  line-height: 106px;
  box-shadow: 0 0 1px #999;
}

.pick {
  position: absolute;
  right: 21px;
  top: 46px;
  width: 40px;
  height: 40px;
}

.secret {
  position: absolute;
  left: 160px;
  right: 0;
  top: 0;
  height: 122px;
  padding: 0 0 0 67px;
  border: none;
  background: none;
  color: #595959;
  font-size: 67px;
  font-weight: 500;
}

.hmi-button {
  position: absolute;
  left: 992px;
  width: 274px;
  height: 140px;
  display: flex;
  align-items: center;
  justify-content: center;
  gap: 37px;
  padding: 0 2px 0 0;
  border: 4px solid #c3c9ce;
  background:
    linear-gradient(90deg, #8b9095, #4f5355 4px, transparent 4px, transparent calc(100% - 4px), #4f5355 calc(100% - 4px), #8b9095),
    linear-gradient(#5a5e60 4px, #e6ecf1 4px, #e6ecf1 10px, #d6e0e7 11px, #d6e0e7 119px, #868b8f 120px, #868b8f 126px, #55595c 128px);
  font-size: 65px;
  line-height: 80px;
}

.hmi-button .gear {
  right: -3px;
  top: -4px;
}

.login {
  top: 208px;
}

.logout {
  top: 419px;
}

.result {
  position: absolute;
  left: 245px;
  top: 598px;
  width: 674px;
  height: 101px;
  border: 1px solid #fff;
}

.mark-user {
  left: 213px;
  top: 208px;
  width: 730px;
  height: 143px;
}

.mark-password {
  left: 206px;
  top: 421px;
  width: 737px;
  height: 140px;
}

.mark-buttons {
  left: 998px;
  top: 205px;
  width: 261px;
  height: 350px;
}

.mark-result {
  left: 233px;
  top: 587px;
  width: 693px;
  height: 120px;
}

.note {
  position: absolute;
  margin: 0;
  font-size: 19px;
  line-height: 24px;
  color: #ed1c24;
}

.note-user {
  left: 484px;
  top: 173px;
}

.note-login {
  left: 1068px;
  top: 171px;
}

.note-password {
  left: 477px;
  top: 392px;
}

.note-logout {
  left: 1070px;
  top: 393px;
}

.note-result {
  left: 480px;
  top: 637px;
}

/* library panel */
.library {
  width: 243px;
}

.library .panel-body {
  padding: 10px 10px 10px 8px;
  background: #f0f0f0;
  font-size: 14px;
}

.source {
  position: relative;
  flex: none;
}

.source select {
  width: 100%;
  height: 22px;
  display: block;
  padding: 0;
  appearance: none;
  border: 1px solid #adadad;
  border-radius: 0;
  background: #e1e1e1;
  font-size: 13px;
  text-align: center;
  text-align-last: center;
}

.source svg {
  position: absolute;
  right: 3px;
  bottom: 3px;
  width: 8px;
  height: 4px;
}

.search {
  flex: none;
  height: 24px;
  margin-top: 11px;
  border: 1px solid #ccc;
  background: #f0f0f0;
  box-shadow: inset 0 0 0 1px #fff;
}

.preview {
  flex: 1;
  margin-top: 8px;
  border: 1px solid #a0a0a0;
  border-right-color: #fff;
  border-bottom-color: #fff;
}

.size {
  flex: none;
  height: 18px;
  margin: 8px 7px 0;
  appearance: none;
  background: none;
}

.size::-webkit-slider-runnable-track {
  height: 5px;
  border: 1px solid #d6d6d6;
  background: #e7eaea;
}

.size::-webkit-slider-thumb {
  appearance: none;
  width: 8px;
  height: 17px;
  margin-top: -7px;
  background: #0078d7;
}

.check {
  display: flex;
  align-items: center;
  gap: 4px;
}

.check input {
  appearance: none;
  width: 16px;
  height: 16px;
  border: 1px solid #333;
  background: #fff;
}

.size + .check {
  margin: 20px 0 14px;
}

.apply {
  display: flex;
  align-items: center;
  justify-content: space-between;
  margin-top: 85px;
}

.apply-all,
.remove {
  height: 26px;
  border: 1px solid #adadad;
  background: #e1e1e1;
}

.apply-all {
  width: 161px;
  font-size: 15px;
}

.remove {
  font-size: 13px;
}

.library hr {
  width: 100%;
  margin: 14px 0 10px;
  border: 0;
  border-top: 1px solid #a0a0a0;
  border-bottom: 1px solid #fff;
}

/* status bar */
.statusbar {
  position: relative;
  flex: none;
  height: 30px;
  padding-top: 3px;
  display: flex;
  background: #f0f0f0;
  font-size: 16px;
  line-height: 27px;
}

.cell {
  border-right: 2px solid #a0a0a0;
  padding-left: 7px;
}

.model {
  width: 190px;
  padding-left: 2px;
}

.info {
  width: 215px;
}

.grow {
  flex: 1;
}

.blank {
  width: 110px;
}

.pos {
  width: 85px;
}

.gap {
  width: 31px;
}

.cap {
  width: 45px;
}

.lock-key {
  width: 53px;
}

.off {
  color: #a0a0a0;
}

.zoom {
  width: 207px;
  padding: 0 7px;
  display: flex;
  align-items: center;
  gap: 4px;
}

.percent {
  flex: 1;
  white-space: nowrap;
}

.sign {
  color: #888;
}

.zoom-slider {
  width: 100px;
}

.ticks {
  height: 4px;
  margin: 0 5px;
  background: repeating-linear-gradient(90deg, #333 0 1px, transparent 1px 8px);
}

.zoom-slider input {
  display: block;
  width: 100%;
  height: 18px;
  appearance: none;
  background: none;
}

.zoom-slider input::-webkit-slider-runnable-track {
  height: 4px;
  border: 1px solid #d6d6d6;
  background: #e7eaea;
}

.zoom-slider input::-webkit-slider-thumb {
  appearance: none;
  width: 11px;
  height: 18px;
  margin-top: -8px;
  background: #0078d7;
  clip-path: polygon(50% 0, 100% 30%, 100% 100%, 0 100%, 0 30%);
}

.zoom svg {
  width: 16px;
  height: 16px;
}

.watermark {
  position: absolute;
  right: 14px;
  bottom: 10px;
  font-family: 'Liberation Sans', sans-serif;
  font-size: 34px;
  line-height: 40px;
  color: rgba(240, 240, 240, 0.6);
  text-shadow: 1px 1px 1px #888, -1px -1px 1px #ccc;
  pointer-events: none;
}
```
